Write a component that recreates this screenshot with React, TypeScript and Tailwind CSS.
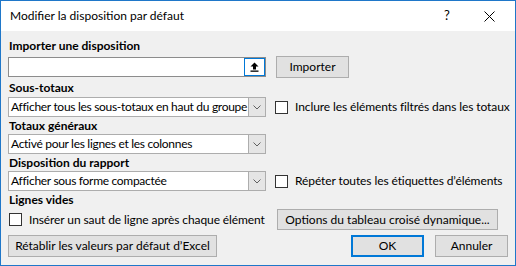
const font = "font-['Lato',sans-serif]";

function Chevron() {
  return (
    <svg width="8" height="5" viewBox="0 0 8 5" aria-hidden="true">
      <path d="M0.5 0.5L4 4L7.5 0.5" fill="none" stroke="#606060" strokeWidth="1" />
    </svg>
  );
}

function Select({ value }: { value: string }) {
  return (
    <div className="w-[258px] shrink-0 h-[20px] flex border border-[#adadad] bg-white">
      <div className="flex-1 pl-[2px] leading-[18px] tracking-[-0.3px] whitespace-nowrap overflow-hidden">{value}</div>
      <div className="w-[17px] h-full bg-[#e5e5e5] border-l border-[#adadad] flex items-center justify-center">
        <Chevron />
      </div>
    </div>
  );
}

function Checkbox({ label }: { label: string }) {
  return (
    <div className="flex items-center gap-[7px] whitespace-nowrap tracking-[-0.1px]">
      <div className="w-[13px] h-[13px] shrink-0 border border-[#333333] bg-white" />
      <span>{label}</span>
    </div>
  );
}

function Button({ label, width, primary }: { label: string; width: string; primary?: boolean }) {
  return (
    <div
      className={
        "h-[22px] shrink-0 flex items-center justify-center bg-[#e1e1e1] whitespace-nowrap " +
        width +
        (primary ? " border-2 border-[#0078d7]" : " border border-[#adadad]")
      }
    >
      {label}
    </div>
  );
}

export default function App() {
  return (
    <div className={"w-[516px] h-[266px] border border-[#1f77c9] bg-[#f0f0f0] flex flex-col text-[12px] text-black " + font}>
      {/* Title bar */}
      <div className="h-[30px] bg-white flex items-center pl-[9px]">
        <span className="flex-1">Modifier la disposition par défaut</span>
        <span className="w-[10px] text-[13px]">?</span>
        <svg className="ml-[30px] mr-[20px]" width="11" height="11" viewBox="0 0 11 11" aria-hidden="true">
          <path d="M0.5 0.5L10.5 10.5M10.5 0.5L0.5 10.5" stroke="#000" strokeWidth="1" />
        </svg>
      </div>

      <div className="flex flex-col pl-[7px] pt-[6px]">
        <div className="h-[17px] leading-[17px] font-bold pl-[1px]">Importer une disposition</div>

        <div className="mt-[2px] h-[22px] flex items-center">
          <div className="w-[258px] shrink-0 h-[20px] flex border border-[#8c8c8c] bg-white">
            <div className="flex-1" />
            <div className="w-[21px] h-full border border-[#0078d7] flex items-center justify-center">
              <svg width="9" height="10" viewBox="0 0 9 10" aria-hidden="true">
                <path d="M4.5 0.5L8.5 4.5H6V7.5H3V4.5H0.5Z" fill="#000" />
                <rect x="0.5" y="8.5" width="8" height="1.3" fill="#000" />
              </svg>
            </div>
          </div>
          <div className="ml-[10px]">
            <Button label="Importer" width="w-[73px]" />
          </div>
        </div>

        <div className="h-[19px] leading-[19px] font-bold pl-[1px]">Sous-totaux</div>
        <div className="h-[20px] flex items-center">
          <Select value="Afficher tous les sous-totaux en haut du groupe" />
          <div className="ml-[9px]">
            <Checkbox label="Inclure les éléments filtrés dans les totaux" />
          </div>
        </div>

        <div className="h-[17px] leading-[17px] font-bold pl-[1px]">Totaux généraux</div>
        <div className="h-[20px] flex items-center">
          <Select value="Activé pour les lignes et les colonnes" />
        </div>

        <div className="h-[17px] leading-[17px] font-bold pl-[1px]">Disposition du rapport</div>
        <div className="h-[20px] flex items-center">
          <Select value="Afficher sous forme compactée" />
          <div className="ml-[9px]">
            <Checkbox label="Répéter toutes les étiquettes d’éléments" />
          </div>
        </div>

        <div className="h-[17px] leading-[17px] font-bold pl-[1px]">Lignes vides</div>
        <div className="mt-[1px] h-[21px] flex items-center">
          <div className="w-[258px] shrink-0 pl-[1px]">
            <Checkbox label="Insérer un saut de ligne après chaque élément" />
          </div>
          <div className="ml-[11px]">
            <div className="h-[21px] w-[221px] flex items-center justify-center bg-[#e1e1e1] border border-[#adadad] whitespace-nowrap">
              Options du tableau croisé dynamique...
            </div>
          </div>
        </div>

        <div className="mt-[5px] h-[22px] flex items-center pr-[7px]">
          <Button label="Rétablir les valeurs par défaut d’Excel" width="w-[209px]" />
          <div className="flex-1 flex justify-end gap-[11px]">
            <Button label="OK" width="w-[73px]" primary />
            <Button label="Annuler" width="w-[73px]" />
          </div>
        </div>
      </div>
    </div>
  );
}
